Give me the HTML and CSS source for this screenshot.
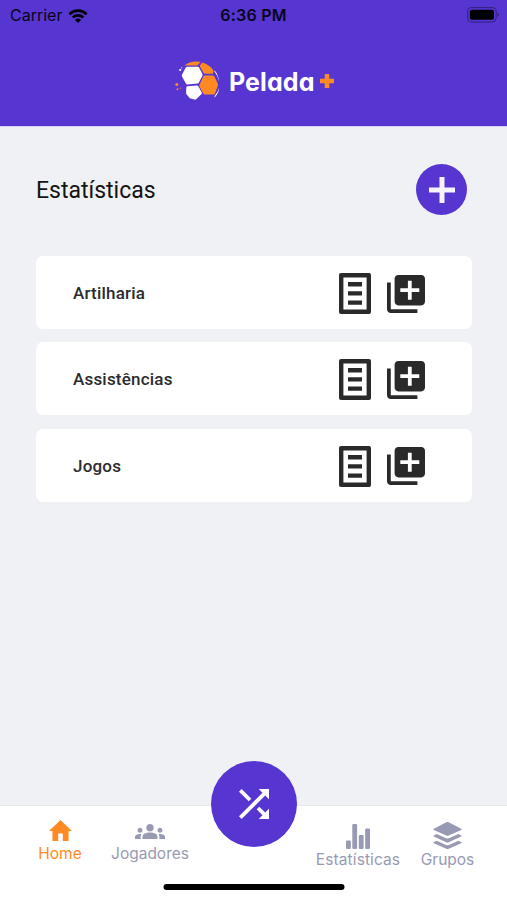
FILE: index.html
```html
<!DOCTYPE html>
<html lang="pt-BR">
<head>
  <meta charset="UTF-8" />
  <meta name="viewport" content="width=device-width, initial-scale=1.0"/>
  <title>Pelada+</title>
  <link rel="stylesheet" href="styles.css">
</head>
<body>
  <div class="app">
    <header class="header">
      <div class="status-bar">
        <div class="carrier">
          <span>Carrier</span>
          <svg class="wifi" viewBox="0 0 20 15">
            <path d="M0.5 5.2a13.6 13.6 0 0 1 19 0l-1.9 2a10.9 10.9 0 0 0-15.2 0z"/>
            <path d="M3.8 8.6a9 9 0 0 1 12.4 0l-1.9 2a6.2 6.2 0 0 0-8.6 0z"/>
            <path d="M7 11.9a4.3 4.3 0 0 1 6 0l-3 3z"/>
          </svg>
        </div>
        <span class="time">6:36 PM</span>
        <svg class="battery" viewBox="0 0 33 16">
          <rect x="0.6" y="0.6" width="28.6" height="14.4" rx="4" fill="none" stroke="#000" stroke-opacity="0.4"/>
          <rect x="2.8" y="2.8" width="24.2" height="10" rx="2"/>
          <path d="M30.6 5.6c2 .8 2 3.6 0 4.4z" fill-opacity="0.4"/>
        </svg>
      </div>
      <div class="brand">
        <svg class="ball" viewBox="0 0 48 42">
          <g fill="#fff">
            <path d="M12.3 6.8h10.4q1 0 1.5.9l3.2 6.4q.4.8 0 1.6l-3.6 7q-.5.9-1.5.9l-10 .8q-1 0-1.4-.9L7 16.4q-.4-1 0-1.8l3.8-7q.5-.8 1.5-.8z"/>
            <path d="M12.6 26.2l9.2-.8q1 0 1.5.8l3.5 6.2q.5.9-.2 1.6l-5.4 5.2q-.7.6-1.6.4l-4-1q-.7-.2-1.2-.8l-2.8-3.3q-.5-.6-.5-1.5l.2-5.5q.1-1.2 1.3-1.3z"/>
            <path d="M39.7 10.5q3.7 4.3 4.400 11-1.200-6-4.700-10z"/>
            <path d="M39.3 36.4q3.7-4 4.700-8.400-.3 5.400-4.200 9.200z"/>
            <circle cx="5.2" cy="10" r="1.1"/>
            <circle cx="6.8" cy="7.8" r=".6"/>
          </g>
          <g fill="#ff8a24">
            <path d="M9.6 5.6q6-5.3 16-3.8l-2.7 3.1q-.5.6-1.3.6H12z"/>
            <path d="M27.3 2.5q8.4 2.7 11.2 8.2l-.6 3.1H30q-1 0-1.4-.8L25 6.8q-.5-1 .2-1.8z"/>
            <path d="M30 15.4h7.8q1 0 1.5.8l3.5 7.5q.4.8.1 1.7L40 33.6q-.4 1-1.4 1H30q-1 0-1.5-.9l-4-7.3q-.4-.8 0-1.6l4-8.5q.5-.9 1.5-.9z"/>
            <circle cx="1.8" cy="24.6" r="1.5"/>
            <circle cx="2.5" cy="29.3" r="1"/>
            <circle cx="5.6" cy="28.1" r=".7"/>
          </g>
        </svg>
        <span class="brand-name">Pelada</span>
        <svg class="brand-plus" viewBox="0 0 14 14">
          <path d="M4.7 0h4.600v4.700H14v4.600H9.300V14H4.700V9.300H0V4.700h4.700z"/>
        </svg>
      </div>
    </header>

    <main class="content">
      <div class="title-row">
        <h1>Estatísticas</h1>
        <button class="add-button" aria-label="Adicionar">
          <svg viewBox="0 0 26 26"><path d="M10.500 0h5v10.500H26v5H15.500V26h-5V15.500H0v-5h10.500z"/></svg>
        </button>
      </div>

      <div class="list">
        <div class="card">
          <span>Artilharia</span>
          <div class="card-actions">
            <svg class="icon-list" viewBox="0 0 32 41">
              <path fill-rule="evenodd" d="M2 0h28a2 2 0 0 1 2 2v37a2 2 0 0 1-2 2H2a2 2 0 0 1-2-2V2a2 2 0 0 1 2-2zm2.4 4.4v32.2h23.2V4.4zM9 9h14v4.4H9zm0 9.2h14v4.4H9zm0 9.2h14v4.4H9z"/>
            </svg>
            <svg class="icon-add" viewBox="2 2 20 20">
              <path d="M4 6H2v14c0 1.1.9 2 2 2h14v-2H4V6zm16-4H8c-1.1 0-2 .9-2 2v12c0 1.1.9 2 2 2h12c1.1 0 2-.9 2-2V4c0-1.1-.9-2-2-2zm-1 9h-4v4h-2v-4H9V9h4V5h2v4h4v2z"/>
            </svg>
          </div>
        </div>
        <div class="card">
          <span>Assistências</span>
          <div class="card-actions">
            <svg class="icon-list" viewBox="0 0 32 41">
              <path fill-rule="evenodd" d="M2 0h28a2 2 0 0 1 2 2v37a2 2 0 0 1-2 2H2a2 2 0 0 1-2-2V2a2 2 0 0 1 2-2zm2.4 4.4v32.2h23.2V4.4zM9 9h14v4.4H9zm0 9.2h14v4.4H9zm0 9.2h14v4.4H9z"/>
            </svg>
            <svg class="icon-add" viewBox="2 2 20 20">
              <path d="M4 6H2v14c0 1.1.9 2 2 2h14v-2H4V6zm16-4H8c-1.1 0-2 .9-2 2v12c0 1.1.9 2 2 2h12c1.1 0 2-.9 2-2V4c0-1.1-.9-2-2-2zm-1 9h-4v4h-2v-4H9V9h4V5h2v4h4v2z"/>
            </svg>
          </div>
        </div>
        <div class="card">
          <span>Jogos</span>
          <div class="card-actions">
            <svg class="icon-list" viewBox="0 0 32 41">
              <path fill-rule="evenodd" d="M2 0h28a2 2 0 0 1 2 2v37a2 2 0 0 1-2 2H2a2 2 0 0 1-2-2V2a2 2 0 0 1 2-2zm2.4 4.4v32.2h23.2V4.4zM9 9h14v4.4H9zm0 9.2h14v4.4H9zm0 9.2h14v4.4H9z"/>
            </svg>
            <svg class="icon-add" viewBox="2 2 20 20">
              <path d="M4 6H2v14c0 1.1.9 2 2 2h14v-2H4V6zm16-4H8c-1.1 0-2 .9-2 2v12c0 1.1.9 2 2 2h12c1.1 0 2-.9 2-2V4c0-1.1-.9-2-2-2zm-1 9h-4v4h-2v-4H9V9h4V5h2v4h4v2z"/>
            </svg>
          </div>
        </div>
      </div>
    </main>

    <nav class="tab-bar">
      <a class="tab tab-home active">
        <svg viewBox="2 3 20 17" width="23" height="21" preserveAspectRatio="none"><path d="M10 20v-6h4v6h5v-8h3L12 3 2 12h3v8z"/></svg>
        <span>Home</span>
      </a>
      <a class="tab tab-players">
        <svg viewBox="0 6 24 12" width="30" height="15"><path d="M12 12.75c1.63 0 3.07.39 4.24.9 1.08.48 1.76 1.56 1.76 2.73V18H6v-1.61c0-1.18.68-2.26 1.76-2.73 1.17-.52 2.61-.91 4.24-.91zM4 13c1.1 0 2-.9 2-2s-.9-2-2-2-2 .9-2 2 .9 2 2 2zm1.13 1.1C4.76 14.04 4.39 14 4 14c-.99 0-1.93.21-2.78.58C.48 14.9 0 15.62 0 16.43V18h4.5v-1.61c0-.83.23-1.61.63-2.29zM20 13c1.1 0 2-.9 2-2s-.9-2-2-2-2 .9-2 2 .9 2 2 2zm4 3.43c0-.81-.48-1.53-1.22-1.85C21.93 14.21 20.99 14 20 14c-.39 0-.76.04-1.13.1.4.68.63 1.46.63 2.29V18H24v-1.57zM12 6c1.66 0 3 1.34 3 3s-1.34 3-3 3-3-1.34-3-3 1.34-3 3-3z"/></svg>
        <span>Jogadores</span>
      </a>
      <button class="shuffle" aria-label="Sortear">
        <svg viewBox="4 4 16 16"><path d="M10.59 9.17L5.41 4 4 5.41l5.17 5.17 1.42-1.41zM14.5 4l2.04 2.04L4 18.59 5.41 20 17.96 7.46 20 9.5V4h-5.5zm.33 9.41l-1.41 1.41 3.13 3.13L14.5 20H20v-5.5l-2.04 2.04-3.13-3.13z"/></svg>
      </button>
      <a class="tab tab-stats">
        <svg viewBox="0 0 24 25" width="24" height="25">
          <rect x="0" y="16.4" width="4.8" height="8.6" rx="1.2"/>
          <rect x="6.3" y="0" width="4.8" height="25" rx="1.2"/>
          <rect x="12.8" y="11" width="4.8" height="14" rx="1.2"/>
          <rect x="19.2" y="4.6" width="4.8" height="20.4" rx="1.2"/>
        </svg>
        <span>Estatísticas</span>
      </a>
      <a class="tab tab-groups">
        <svg viewBox="0 0 29 27" width="29" height="27">
          <path d="M.8 6.7L13.3.3q1.2-.5 2.4 0l12.5 6.4q.9.6 0 1.2l-12.5 5.6q-1.2.5-2.4 0L.8 7.9q-.9-.6 0-1.2z"/>
          <path d="M.8 13.400l2.900-1.300 8.700 4q2.100.8 4.200 0l8.700-4 2.900 1.300q.9.600 0 1.200l-12.500 5.700q-1.200.4-2.400 0L.8 14.600q-.9-.6 0-1.200z"/>
          <path d="M.8 20.100l2.900-1.300 8.700 4q2.100.8 4.200 0l8.700-4 2.900 1.300q.9.600 0 1.200l-12.500 5.500q-1.200.4-2.400 0L.8 21.300q-.9-.6 0-1.200z"/>
        </svg>
        <span>Grupos</span>
      </a>
      <div class="home-indicator"></div>
    </nav>
  </div>
</body>
</html>
```

FILE: styles.css
```css
* {
  box-sizing: border-box;
}

body {
  margin: 0;
  font-family: 'Roboto', sans-serif;
  background: #f0f1f5;
}

svg {
  display: block;
}

.app {
  display: flex;
  flex-direction: column;
  height: 900px;
}

.header {
  height: 127px;
  background: #5635d1;
  border-bottom: 1px solid #d8d0f5;
}

.status-bar {
  display: grid;
  grid-template-columns: 1fr auto 1fr;
  align-items: center;
  height: 30px;
  padding: 0 8px 0 10px;
  font-family: 'Inter', sans-serif;
  font-size: 16px;
  color: #08051a;
}

.carrier {
  display: flex;
  align-items: center;
  gap: 6px;
}

.wifi {
  width: 20px;
  height: 15px;
}

.time {
  margin-right: 2px;
  font-weight: 600;
  letter-spacing: 0.2px;
}

.battery {
  width: 33px;
  height: 16px;
  margin-right: -1px;
  justify-self: end;
}

.brand {
  display: flex;
  align-items: center;
  height: 42px;
  margin-top: 30px;
  padding-left: 175px;
}

.ball {
  width: 48px;
  height: 42px;
}

.brand-name {
  width: 92px;
  padding: 1px 0 0 6px;
  font-family: 'Inter', sans-serif;
  font-feature-settings: 'cv11';
  font-size: 25px;
  font-weight: 700;
  letter-spacing: 0.1px;
  color: #fff;
}

.brand-plus {
  width: 14px;
  height: 14px;
  margin-left: 5px;
  fill: #ff8a24;
}

.content {
  flex: 1;
  padding: 37px 35px 0 36px;
}

.title-row {
  display: flex;
  justify-content: space-between;
  align-items: center;
  padding-right: 5px;
}

h1 {
  margin: 2px 0 0;
  font-size: 23px;
  font-weight: 400;
  color: #141416;
}

.add-button {
  display: flex;
  justify-content: center;
  align-items: center;
  width: 51px;
  height: 51px;
  padding: 0;
  border: none;
  border-radius: 50%;
  background: #5635d1;
}

.add-button svg {
  width: 26px;
  height: 26px;
  fill: #f5f3ff;
}

.list {
  display: flex;
  flex-direction: column;
  gap: 13.4px;
  margin-top: 41px;
}

.card {
  display: flex;
  justify-content: space-between;
  align-items: center;
  height: 73px;
  padding: 2px 47px 0 37px;
  border-radius: 7px;
  background: #fff;
  font-size: 17px;
  font-weight: 500;
  letter-spacing: 0.2px;
  color: #2b2b2d;
}

.card span {
  margin-bottom: 1px;
}

.card-actions {
  display: flex;
  align-items: center;
  gap: 16px;
  fill: #2a2a2a;
}

.icon-list {
  width: 32px;
  height: 41px;
}

.icon-add {
  width: 38px;
  height: 38px;
}

.tab-bar {
  display: grid;
  grid-template-columns: 82px 98px 110px 98px 81px;
  justify-content: start;
  position: relative;
  height: 95px;
  padding-left: 19px;
  border-top: 1px solid #e6e7eb;
  background: #fff;
  font-family: 'Inter', sans-serif;
  font-size: 15.5px;
  color: #979ab2;
  fill: #979ab2;
}

.tab {
  display: flex;
  flex-direction: column;
  align-items: center;
}

.tab span {
  line-height: 20px;
}

.tab-home {
  padding-top: 14px;
}

.tab-home span {
  margin-top: 3px;
}

.tab-players {
  padding-top: 18px;
}

.tab-players span {
  margin-top: 5px;
}

.tab-stats {
  padding-top: 18px;
}

.tab-stats span {
  margin-top: 1px;
  letter-spacing: 0.1px;
}

.tab-groups {
  padding-top: 16px;
}

.tab-groups span {
  margin-top: 1px;
}

.active {
  color: #ff8a24;
  fill: #ff8a24;
}

.shuffle {
  display: flex;
  justify-content: center;
  align-items: center;
  justify-self: center;
  width: 86px;
  height: 86px;
  margin-top: -45px;
  padding: 0;
  border: none;
  border-radius: 50%;
  background: #5635d1;
}

.shuffle svg {
  width: 30px;
  height: 30px;
  fill: #fff;
}

.home-indicator {
  position: absolute;
  bottom: 10px;
  left: 50%;
  width: 181px;
  height: 6px;
  border-radius: 3px;
  background: #000;
  transform: translateX(-50%);
}
```
